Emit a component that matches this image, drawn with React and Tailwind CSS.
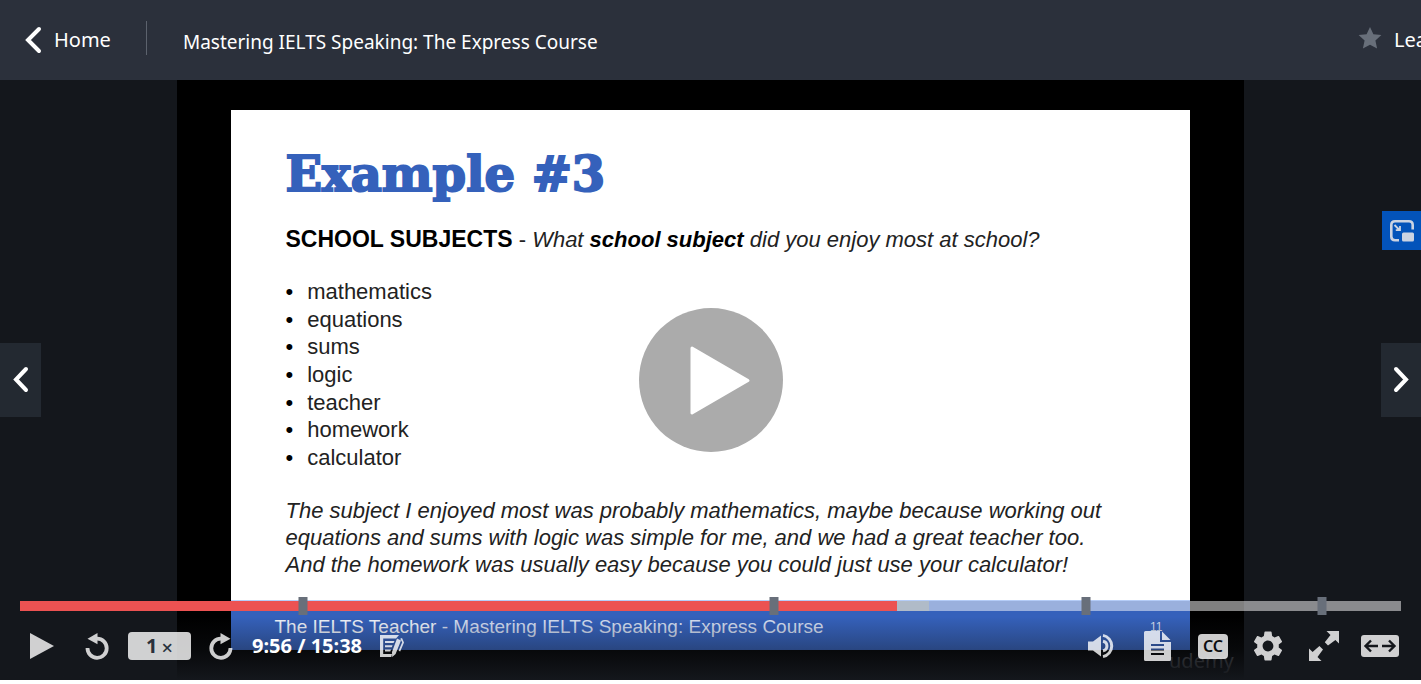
import { useState } from "react";
import { MdSettings } from "react-icons/md";

const subjects = ["mathematics", "equations", "sums", "logic", "teacher", "homework", "calculator"];
const bookmarks = [20.5, 54.6, 77.2, 94.3];

function Chevron({ d, className }) {
  return (
    <svg viewBox="0 0 18 28" className={className} fill="none" stroke="#fff" strokeWidth="4" strokeLinecap="round" strokeLinejoin="miter">
      <path d={d} />
    </svg>
  );
}

function Rotate({ flip }) {
  return (
    <svg viewBox="0 0 24 28" className="h-7 w-6 opacity-80" fill="none">
      <g transform={flip ? "translate(24 0) scale(-1 1)" : undefined}>
        <path d="M2.5 16A9.6 9.6 0 1 0 12 6.6" stroke="#fff" strokeWidth="3.8" />
        <path d="M2.5 6.8L12.5 1V12.2z" fill="#fff" />
      </g>
    </svg>
  );
}

function NoteIcon() {
  return (
    <svg viewBox="0 0 24 24" className="h-6 w-6 opacity-80" fill="#fff">
      <path fillRule="evenodd" d="M0 1H19L16 4.5H3.2V20H12L11.3 23H0z" />
      <path d="M5 7H14.5L13.5 9H5zM5 11.2H12.6L11.8 13.2H5zM5 15.4H11L10.3 17.4H5z" />
      <path d="M17 4.6L21 6.6L15.6 20L12.2 23L12 18zM22 4L24 8.6L20.2 17.6L18.6 16.8L22.2 8.2L20.2 4.8z" />
    </svg>
  );
}

function VolumeIcon() {
  return (
    <svg viewBox="0 0 28 26" className="h-[26px] w-7 opacity-80">
      <path d="M0 8.5H5L13 2.5V23.5L5 17.5H0z" fill="#fff" />
      <path d="M15 8.2A4.9 4.9 0 0 1 15 17.8M15 2.4A10.8 10.8 0 0 1 15 23.6" fill="none" stroke="#fff" strokeWidth="3" />
    </svg>
  );
}

function TranscriptIcon() {
  return (
    <svg viewBox="0 0 28 30" className="h-[30px] w-7 opacity-80" fill="#fff">
      <path fillRule="evenodd" d="M1.5 0H16V11H27V28.5Q27 30 25.5 30H1.5Q0 30 0 28.5V1.5Q0 0 1.5 0zM7 13V15H20V13zM7 17.5V19.5H20V17.5zM7 22V24H20V22z" />
      <path d="M18 0.5L26.5 9H18z" />
    </svg>
  );
}

function ExpandIcon() {
  return (
    <svg viewBox="0 0 30 30" className="h-[30px] w-[30px] opacity-80">
      <path d="M17.5 0H30V12.5L26.4 8.9L19 14.6L15.8 11.2L21.5 4zM12.5 30H0V17.5L3.6 21.1L10.4 15L14 18.4L8.5 26z" fill="#fff" />
    </svg>
  );
}

function WidthIcon() {
  return (
    <svg viewBox="0 0 38 22" className="h-[22px] w-[38px]">
      <rect width="38" height="22" rx="3" fill="#fff" opacity="0.8" />
      <path d="M17 11H5M10 5.5L4.5 11L10 16.5M21 11H33M28 5.5L33.5 11L28 16.5" fill="none" stroke="#14171c" strokeWidth="2.4" />
    </svg>
  );
}

function Header() {
  return (
    <header className="flex h-20 items-center overflow-hidden bg-[#2b303b] font-['Noto_Sans','Open_Sans',sans-serif] text-xl whitespace-nowrap text-white">
      <a href="#home" className="flex items-center gap-3 pl-6">
        <Chevron d="M15 3L4 14L15 25" className="h-7 w-[18px]" />
        Home
      </a>
      <div className="mb-1 ml-[35px] h-[34px] w-px bg-[#5c626d]" />
      <h1 className="ml-9 pt-1 text-[19px]">Mastering IELTS Speaking: The Express Course</h1>
      <a href="#rating" className="-mr-1.5 ml-auto flex items-center gap-3">
        <svg viewBox="0 0 24 24" className="mb-1 h-6 w-6" fill="#686f7a">
          <path d="M12 1l3.4 7.2 8 .9-6 5.4 1.7 8.1L12 18.7 4.9 22.6l1.7-8.1-6-5.4 8-.9z" />
        </svg>
        <span>Lea</span>
      </a>
    </header>
  );
}

function Slide() {
  return (
    <article className="flex h-[90%] w-[90%] flex-col bg-white font-['Liberation_Sans',Arial,sans-serif] whitespace-nowrap text-[#222]">
      <div className="flex-1 px-[55px] pt-8">
        <h2 className="font-['DejaVu_Serif',serif] text-5xl leading-[64px] font-bold text-[#3561bb] [-webkit-text-stroke:2px_#3561bb]">Example #3</h2>
        <p className="mt-[19px] text-[22px] leading-7">
          <strong className="text-[23px] text-black">SCHOOL SUBJECTS</strong> - <em>What <strong className="text-black">school subject</strong> did you enjoy most at school?</em>
        </p>
        <ul className="mt-6 flex h-[193px] flex-col justify-between text-[22px] leading-[27px]">
          {subjects.map((s) => (
            <li key={s} className="flex gap-[14px]">
              <span className="text-black">•</span>
              {s}
            </li>
          ))}
        </ul>
        <p className="mt-[26px] text-[22px] leading-[27px] italic">
          The subject I enjoyed most was probably mathematics, maybe because working out
          <br />
          equations and sums with logic was simple for me, and we had a great teacher too.
          <br />
          And the homework was usually easy because you could just use your calculator!
        </p>
      </div>
      <footer className="flex h-[50px] items-center justify-between border-t border-[#b5cdf8] bg-[#3561bb] pt-[3px] pr-7 pl-11 text-[19px] text-[#d5dff3]">
        <p>
          <span className="text-[#f0f4fc]">The IELTS Teacher</span> - Mastering IELTS Speaking: Express Course
        </p>
        <span className="text-xs">11</span>
      </footer>
    </article>
  );
}

function Progress() {
  return (
    <div className="relative mx-5 h-[10px] bg-white/50">
      <div className="flex h-full">
        <div className="w-[63.5%] bg-[#ec5252]" />
        <div className="w-[2.3%] bg-[#c6c6b4]/50" />
      </div>
      {bookmarks.map((left) => (
        <span key={left} className="absolute -top-1 h-[18px] w-[9px] -translate-x-1/2 bg-[#686f7a]" style={{ left: left + "%" }} />
      ))}
    </div>
  );
}

function Controls({ toggle }) {
  return (
    <div className="absolute inset-x-0 bottom-0 bg-linear-to-b from-transparent from-20% via-[#14171c]/35 via-60% to-[#14171c]">
      <Progress />
      <div className="flex h-[69px] items-center justify-between pt-px pr-[22px] pl-7">
        <div className="flex items-center">
          <button aria-label="Play" onClick={toggle}>
            <svg viewBox="0 0 26 28" className="h-7 w-[26px] opacity-80" fill="#fff"><path d="M2 1l24 13L2 27z" /></svg>
          </button>
          <button aria-label="Rewind" className="ml-[31px]"><Rotate /></button>
          <button aria-label="Playback rate" className="ml-[19px] flex h-7 w-[63px] items-center justify-center gap-1 rounded-sm bg-white/80 font-['Noto_Sans',sans-serif] text-xl font-bold text-[#29303b]">
            1 <span className="pt-1 font-medium">×</span>
          </button>
          <button aria-label="Forward" className="ml-[18px]"><Rotate flip /></button>
          <span className="ml-[19px] font-['Noto_Sans',sans-serif] text-xl font-bold text-white">9:56 / 15:38</span>
          <button aria-label="Add note" className="ml-[18px]"><NoteIcon /></button>
        </div>
        <div className="flex items-center">
          <button aria-label="Volume"><VolumeIcon /></button>
          <button aria-label="Transcript" className="ml-7"><TranscriptIcon /></button>
          <button aria-label="Captions" className="ml-[26px] h-[25px] w-[30px] rounded-sm bg-white/80 text-center font-['Noto_Sans',sans-serif] text-base leading-[25px] font-semibold text-[#0c0d10]">CC</button>
          <button aria-label="Settings" className="ml-[22px] text-white opacity-80"><MdSettings size={36} /></button>
          <button aria-label="Full screen" className="ml-[23px]"><ExpandIcon /></button>
          <button aria-label="Expanded view" className="ml-[22px]"><WidthIcon /></button>
        </div>
      </div>
    </div>
  );
}

export default function App() {
  const [playing, setPlaying] = useState(false);
  const toggle = () => setPlaying(!playing);
  const side = "absolute top-1/2 flex h-[74px] -translate-y-1/2 items-center justify-center bg-[#232931]";
  return (
    <div className="min-h-screen overflow-hidden bg-white pb-1">
      <Header />
      <main className="relative flex h-[calc(100vh-84px)] justify-center bg-[#14171c]">
        <div className="relative flex aspect-video h-full items-center justify-center bg-black">
          <Slide />
          <span className="absolute right-[10px] bottom-[5px] font-['Noto_Sans',sans-serif] text-xl text-[#48484c]">udemy</span>
        </div>
        {!playing && (
          <button
            aria-label="Play video"
            onClick={toggle}
            className="absolute top-1/2 left-1/2 -translate-x-1/2 -translate-y-1/2 rounded-full bg-[#ababab]"
          >
            <svg viewBox="0 0 144 144" className="h-36 w-36">
              <path d="M53 40L109 72.5L53 105z" fill="#fff" stroke="#fff" strokeWidth="3" strokeLinejoin="round" />
            </svg>
          </button>
        )}
        <button aria-label="Previous lecture" className={side + " left-0 w-[41px]"}>
          <Chevron d="M14 3L4 13.5L14 24" className="h-7 w-[18px]" />
        </button>
        <button aria-label="Next lecture" className={side + " right-0 w-10"}>
          <Chevron d="M4 3L14 13.5L4 24" className="h-7 w-[18px]" />
        </button>
        <button aria-label="Picture in picture" className="absolute top-[131px] right-0 flex h-[39px] w-[39px] items-center justify-center bg-[#0353ba]">
          <svg viewBox="0 0 24 22" className="h-[22px] w-6" fill="none" stroke="#cbd3e2" strokeWidth="2.6">
            <path d="M22.7 9.5V5Q22.7 1.3 19 1.3H5Q1.3 1.3 1.3 5V16.5Q1.3 20.2 5 20.2H9" />
            <path d="M4.5 5L9.5 10M10 6V10.2H5.8" strokeWidth="1.8" />
            <rect x="12" y="12.5" width="12" height="9" rx="1.5" fill="#cbd3e2" stroke="none" />
          </svg>
        </button>
        <Controls toggle={toggle} />
      </main>
    </div>
  );
}
